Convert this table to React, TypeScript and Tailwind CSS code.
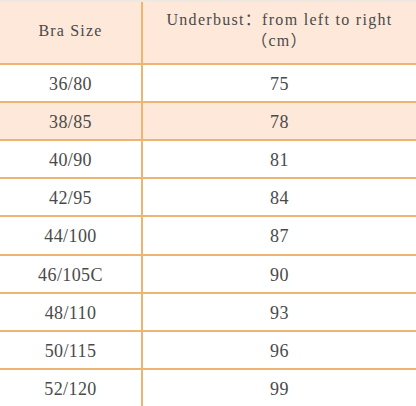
const rows: [string, string, boolean][] = [
  ["36/80", "75", false],
  ["38/85", "78", true],
  ["40/90", "81", false],
  ["42/95", "84", false],
  ["44/100", "87", false],
  ["46/105C", "90", false],
  ["48/110", "93", false],
  ["50/115", "96", false],
  ["52/120", "99", false],
];

export default function App() {
  return (
    <div
      className="w-[416px] h-[406px] flex flex-col bg-white text-[#4a4a4a] overflow-hidden"
      style={{ fontFamily: '"Liberation Serif", "Noto Sans CJK SC", serif' }}
    >
      <div className="h-[2px] bg-[#efe7e1]" />
      <div className="h-[61px] grid grid-cols-[143px_1fr] bg-[#fde8da]">
        <div className="flex items-center justify-center pb-[4px] border-r-2 border-[#eeb572] text-[16px] tracking-[1.2px]">
          Bra Size
        </div>
        <div className="flex flex-col items-center justify-center pb-[5px] text-[16px] leading-[21px] tracking-[1.3px]">
          <span>Underbust：from left to right</span>
          <span>（cm）</span>
        </div>
      </div>
      {rows.map(([size, under, hl]) => (
        <div
          key={size}
          className={`flex-1 grid grid-cols-[143px_1fr] border-t-2 border-[#eeb572] text-[18px] tracking-[0.4px] ${hl ? "bg-[#fde8da]" : "bg-white"}`}
        >
          <div className="flex items-center justify-center pt-[3px] border-r-2 border-[#eeb572]">{size}</div>
          <div className="flex items-center justify-center pt-[3px]">{under}</div>
        </div>
      ))}
    </div>
  );
}
